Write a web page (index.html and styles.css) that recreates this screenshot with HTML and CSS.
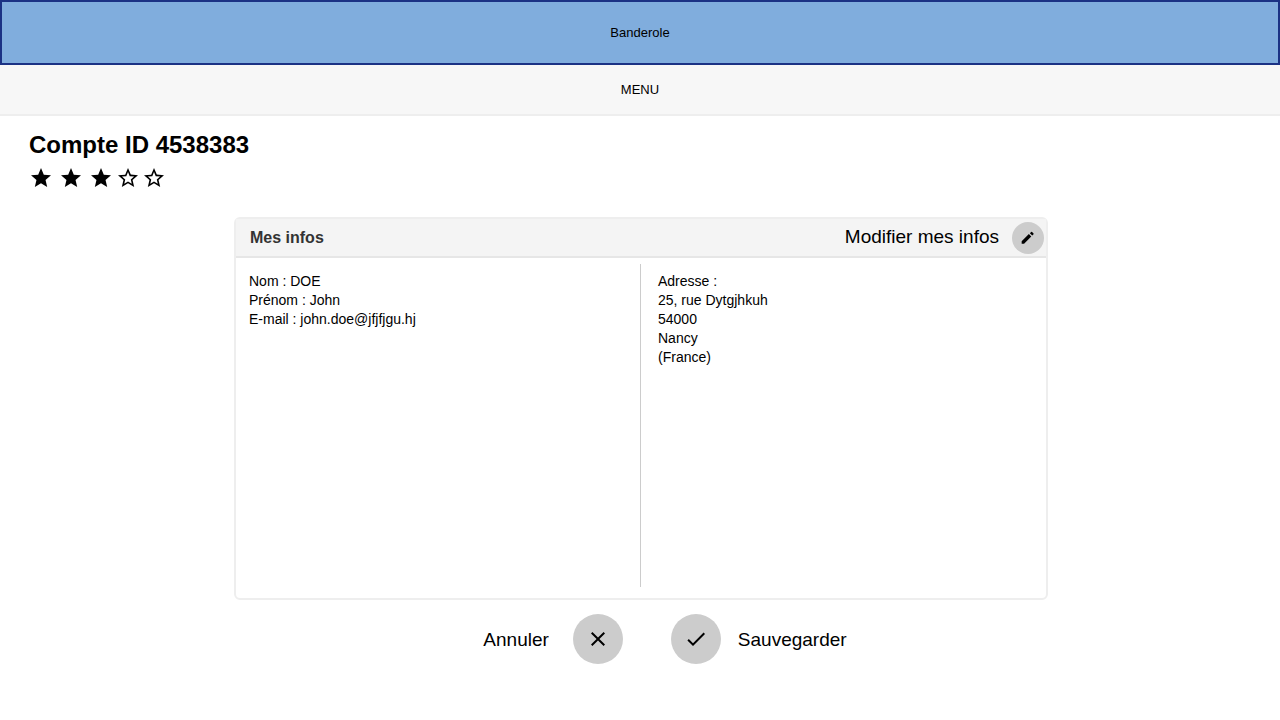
FILE: index.html
```html
<!DOCTYPE html>
<html lang="fr">
<head>
<meta charset="utf-8">
<title>Compte</title>
<link rel="stylesheet" href="styles.css">
</head>
<body>
<header class="banner">Banderole</header>
<nav class="menu">MENU</nav>
<main class="page">
  <h1 class="title">Compte ID 4538383</h1>
  <div class="rating" role="img" aria-label="3 étoiles sur 5">
    <div class="stars stars-full">
      <svg class="icon" viewBox="0 0 24 24"><path d="M12 17.27 18.18 21l-1.64-7.03L22 9.24l-7.19-.61L12 2 9.19 8.63 2 9.24l5.46 4.73L5.82 21z"/></svg>
      <svg class="icon" viewBox="0 0 24 24"><path d="M12 17.27 18.18 21l-1.64-7.03L22 9.24l-7.19-.61L12 2 9.19 8.63 2 9.24l5.46 4.73L5.82 21z"/></svg>
      <svg class="icon" viewBox="0 0 24 24"><path d="M12 17.27 18.18 21l-1.64-7.03L22 9.24l-7.19-.61L12 2 9.19 8.63 2 9.24l5.46 4.73L5.82 21z"/></svg>
    </div>
    <div class="stars stars-empty">
      <svg class="icon" viewBox="0 0 24 24"><path d="m22 9.24-7.19-.62L12 2 9.19 8.63 2 9.24l5.46 4.73L5.82 21 12 17.27 18.18 21l-1.63-7.03L22 9.24zM12 15.4l-3.76 2.27 1-4.28-3.32-2.88 4.38-.38L12 6.1l1.71 4.04 4.38.38-3.32 2.88 1 4.28L12 15.4z"/></svg>
      <svg class="icon" viewBox="0 0 24 24"><path d="m22 9.24-7.19-.62L12 2 9.19 8.63 2 9.24l5.46 4.73L5.82 21 12 17.27 18.18 21l-1.63-7.03L22 9.24zM12 15.4l-3.76 2.27 1-4.28-3.32-2.88 4.38-.38L12 6.1l1.71 4.04 4.38.38-3.32 2.88 1 4.28L12 15.4z"/></svg>
    </div>
  </div>
  <section class="card">
    <div class="card-head">
      <h2 class="card-title">Mes infos</h2>
      <button class="action edit" type="button">
        <span class="label">Modifier mes infos</span>
        <span class="round round-small"><svg class="icon-small" viewBox="0 0 24 24"><path d="M2.5 16.9v3.6h3.6L16.9 9.7l-3.6-3.6zM20.3 6.5a1 1 0 0 0 0-1.4l-2.2-2.2a1 1 0 0 0-1.4 0l-1.9 1.8 3.6 3.6z"/></svg></span>
      </button>
    </div>
    <div class="card-body">
      <div class="column">
        <p>Nom : DOE</p>
        <p>Prénom : John</p>
        <p>E-mail : john.doe@jfjfjgu.hj</p>
      </div>
      <address class="column column-right">
        Adresse :<br>
        25, rue Dytgjhkuh<br>
        54000<br>
        Nancy<br>
        (France)
      </address>
    </div>
  </section>
  <div class="actions">
    <button class="action cancel" type="button">
      <span class="label">Annuler</span>
      <span class="round"><svg class="icon" viewBox="0 0 24 24"><path d="M19 6.41 17.59 5 12 10.59 6.41 5 5 6.41 10.59 12 5 17.59 6.41 19 12 13.41 17.59 19 19 17.59 13.41 12z"/></svg></span>
    </button>
    <button class="action save" type="button">
      <span class="round"><svg class="icon" viewBox="0 0 24 24"><path d="M9 16.17 4.83 12l-1.42 1.41L9 19 21 7l-1.41-1.41z"/></svg></span>
      <span class="label">Sauvegarder</span>
    </button>
  </div>
</main>
</body>
</html>
```
FILE: styles.css
```css
* {
  box-sizing: border-box;
}

body {
  margin: 0;
  background: #fff;
  color: #000;
  font-family: "Liberation Sans", Arial, sans-serif;
  font-size: 14px;
  line-height: 19px;
}

h1, h2, p {
  margin: 0;
}

.banner {
  padding: 21px 0;
  border: 2px solid #1b3284;
  background: #80addd;
  font-size: 13px;
  text-align: center;
}

.menu {
  padding: 15px 0;
  border-bottom: 2px solid #eee;
  background: #f7f7f7;
  font-size: 13px;
  text-align: center;
}

.page {
  padding: 15px 27px 24px 29px;
}

.title {
  font-size: 24px;
  line-height: 28px;
}

.rating {
  display: flex;
  gap: 3px;
  margin: 7px 0 27px;
}

.stars {
  display: flex;
}

.stars-full {
  gap: 6px;
}

.stars-empty {
  gap: 2px;
}

.icon {
  display: block;
  width: 24px;
  height: 24px;
}

.icon-small {
  display: block;
  width: 16px;
  height: 16px;
}

.card {
  max-width: 814px;
  margin: 0 auto;
  border: 2px solid #eee;
  border-radius: 6px;
}

.card-head {
  display: flex;
  align-items: center;
  justify-content: space-between;
  padding: 3px 2px 2px 14px;
  border-bottom: 2px solid #e6e6e6;
  background: #f4f4f4;
}

.card-title {
  padding-bottom: 2px;
  color: #333;
  font-size: 16px;
  line-height: 19px;
}

.card-body {
  display: grid;
  grid-template-columns: 1fr 1fr;
  min-height: 340px;
  padding: 6px 2px 11px 0;
}

.column {
  padding: 8px 13px;
  font-style: normal;
}

.column-right {
  padding-left: 17px;
  border-left: 1px solid #ccc;
}

.actions {
  display: flex;
  justify-content: center;
  gap: 48px;
  padding: 14px 0 0 48px;
}

.action {
  display: flex;
  align-items: center;
  padding: 0;
  border: 0;
  background: none;
  color: inherit;
  font-family: inherit;
  font-size: 19px;
  line-height: 22px;
  cursor: pointer;
}

.edit {
  gap: 13px;
}

.edit .label {
  padding-bottom: 2px;
}

.cancel {
  gap: 24px;
}

.save {
  gap: 17px;
}

.cancel .label,
.save .label {
  padding-top: 2px;
}

.round {
  display: flex;
  align-items: center;
  justify-content: center;
  width: 50px;
  height: 50px;
  border-radius: 50%;
  background: #ccc;
}

.round-small {
  width: 32px;
  height: 32px;
}
```
